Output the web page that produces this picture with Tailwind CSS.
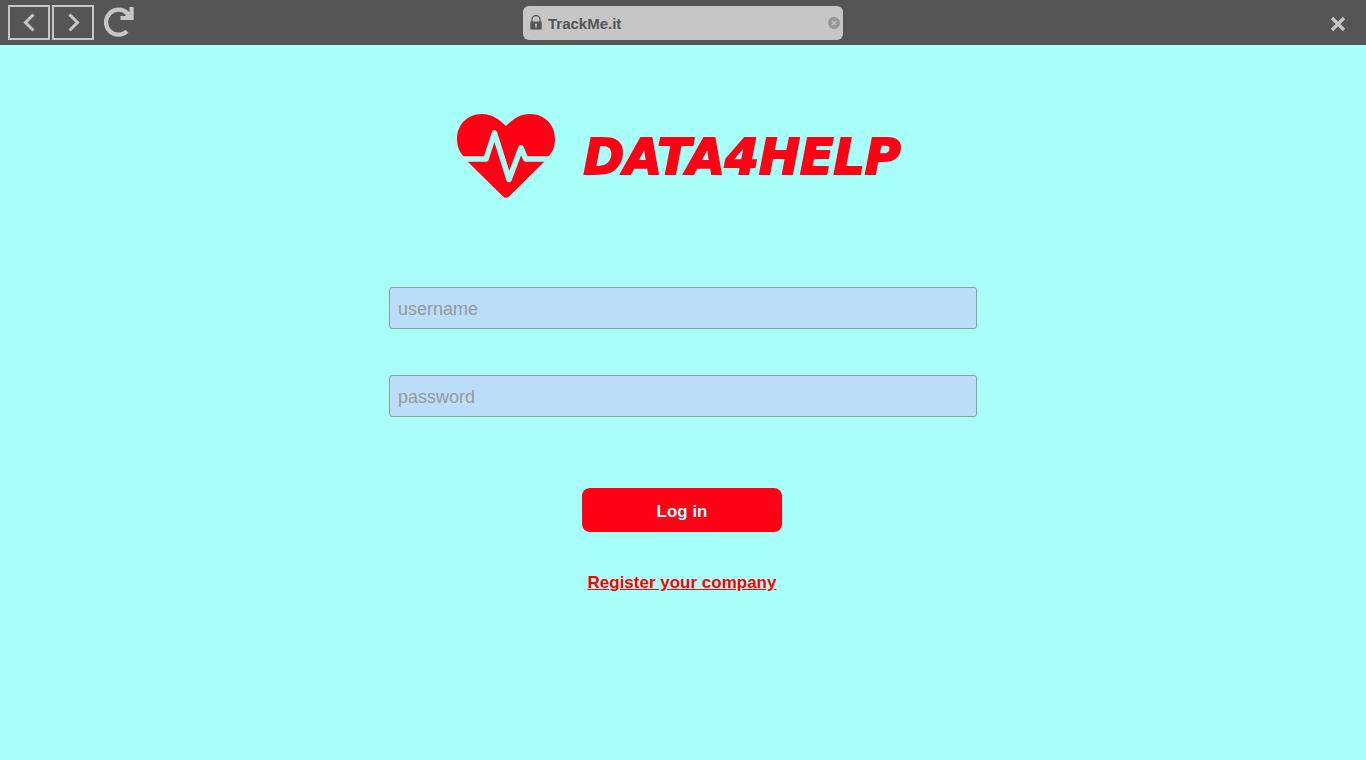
<!DOCTYPE html>
<html lang="en">
<head>
<meta charset="utf-8">
<meta name="viewport" content="width=device-width, initial-scale=1">
<title>Data4Help</title>
<script src="https://cdn.jsdelivr.net/npm/@tailwindcss/browser@4"></script>
</head>
<body class="min-h-screen bg-[#a8fff9] font-['Liberation_Sans',Arial,sans-serif]">
<header class="grid h-[45px] grid-cols-[1fr_320px_1fr] items-center bg-[#555555] px-2 text-[#c6c6c6]">
  <nav class="flex items-center gap-0.5">
    <button type="button" aria-label="Back" class="h-[35px] w-[42px] border-2 border-[#c6c6c6]">
      <svg class="h-full w-full" viewBox="0 0 38 31" fill="none" stroke="currentColor" stroke-width="3"><path d="M23.500 7.500L15.500 15.500L23.500 23.500"/></svg>
    </button>
    <button type="button" aria-label="Forward" class="h-[35px] w-[42px] border-2 border-[#c6c6c6]">
      <svg class="h-full w-full" viewBox="0 0 38 31" fill="none" stroke="currentColor" stroke-width="3"><path d="M15.500 7.500L23.500 15.500L15.500 23.500"/></svg>
    </button>
    <button type="button" aria-label="Reload" class="ml-2">
      <svg class="h-[31px] w-[31px]" viewBox="0 0 31 31"><path d="M23 24.300A12.500 12.500 0 1 1 23.500 6.500L26 9" fill="none" stroke="currentColor" stroke-width="4.300"/><path d="M29.700 0V13H16.500V9H21L25.500 5V0Z" fill="currentColor"/></svg>
    </button>
  </nav>
  <form class="flex h-[34px] items-center rounded-md bg-[#c6c6c6] pr-[3px] pl-[7px] text-[#555555]">
    <svg class="h-[15px] w-3 shrink-0" viewBox="0 0 12 15"><path d="M2 7V4.500a4 4 0 0 1 8 0V7" fill="none" stroke="currentColor" stroke-width="1.300"/><path fill-rule="evenodd" d="M0.300 6.500h11.400v8H0.300zM6 8.600a1.200 1.200 0 0 0-.6 2.200v1.700h1.200v-1.700A1.200 1.200 0 0 0 6 8.600z" fill="currentColor"/></svg>
    <input type="text" aria-label="Address" value="TrackMe.it" class="min-w-0 flex-1 bg-transparent px-1.5 pt-[3px] text-[15px] font-bold outline-none">
    <button type="button" aria-label="Clear address"><svg class="size-3" viewBox="0 0 12 12"><circle cx="6" cy="6" r="6" fill="#969696"/><path d="M4 4L8 8M8 4L4 8" stroke="#c6c6c6" stroke-width="1.300"/></svg></button>
  </form>
  <button type="button" aria-label="Close" class="mr-3 justify-self-end pt-0.5"><svg class="size-4" viewBox="0 0 16 16"><path d="M2 2L14 14M14 2L2 14" stroke="currentColor" stroke-width="3.200"/></svg></button>
</header>
<main class="flex flex-col items-center px-4 pt-[69px] text-[#ff0015]">
  <h1 class="mr-2 flex items-center gap-7">
    <svg class="h-[84px] w-[98px] shrink-0" viewBox="0 0 98 84" aria-hidden="true">
      <path fill="currentColor" d="M49 12C42 5 35 0 25 0C10 0 0 11 0 25C0 32 2 37 6 42C7.500 44 9 46 11 48L46 82.500Q49 85 52 82.500L87 48C89 46 90.500 44 92 42C96 37 98 32 98 25C98 11 88 0 73 0C63 0 56 5 49 12Z"/>
      <path fill="none" stroke="#a8fff9" stroke-width="5.600" stroke-linejoin="round" d="M-1 45H29L37.500 19L52 65.500L64 33.800L68.700 45H99"/>
    </svg>
    <span class="pt-0.5 font-['DejaVu_Sans',Verdana,sans-serif] text-[49px] leading-none font-bold italic [-webkit-text-stroke:2px_#ff0015]">DATA4HELP</span>
  </h1>
  <form class="flex w-full max-w-[588px] flex-col items-center pt-[89px]">
    <input type="text" name="username" aria-label="Username" placeholder="username" class="h-[42px] w-full rounded-[3px] border border-[#999999] bg-[#badefa] px-2 pt-0.5 text-lg placeholder:text-[#999999]">
    <input type="password" name="password" aria-label="Password" placeholder="password" class="mt-[46px] h-[42px] w-full rounded-[3px] border border-[#999999] bg-[#badefa] px-2 pt-0.5 text-lg placeholder:text-[#999999]">
    <button type="submit" class="mt-[71px] mr-0.5 h-11 w-[200px] rounded-lg bg-[#ff0015] pt-[3px] text-[17px] font-bold text-[#a8fff9]">Log in</button>
  </form>
  <a href="#register" class="mt-[38px] mr-0.5 text-[17px] font-bold text-[#ff0000] underline">Register your company</a>
</main>
</body>
</html>
